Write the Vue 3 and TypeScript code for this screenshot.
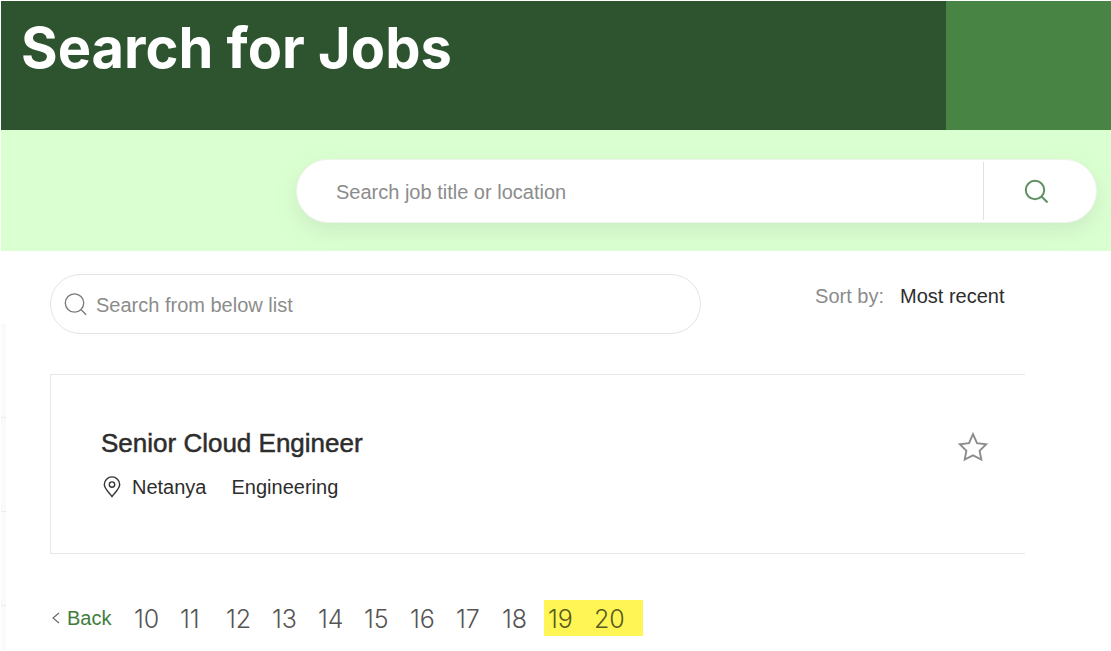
<script setup lang="ts">
import { ref } from 'vue'

interface Job {
  title: string
  city: string
  team: string
}

const query = ref('')
const filter = ref('')
const sort = ref('recent')
const saved = ref(false)
const job: Job = { title: 'Senior Cloud Engineer', city: 'Netanya', team: 'Engineering' }
const pages: number[] = [10, 11, 12, 13, 14, 15, 16, 17, 18]
const marked: number[] = [19, 20]
</script>

<template>
  <div class="page">
    <header class="hero">
      <h1>Search for Jobs</h1>
      <div class="hero-block"></div>
    </header>

    <section class="band">
      <form class="pill" role="search" @submit.prevent>
        <input v-model="query" type="text" aria-label="Search job title or location" placeholder="Search job title or location" />
        <button type="submit" aria-label="Search">
          <svg width="24" height="24" viewBox="0 0 24 24" fill="none" stroke="#5f9060" stroke-width="2">
            <circle cx="11" cy="11" r="9.2" />
            <path d="M17.500 17.500l6 6" />
          </svg>
        </button>
      </form>
    </section>

    <div class="body">
      <aside class="rail"><i></i><i></i><i></i><i></i></aside>
      <main>
        <div class="tools">
          <label class="filter">
            <svg width="24" height="24" viewBox="0 0 24 24" fill="none" stroke="#777" stroke-width="1.3">
              <circle cx="10.5" cy="11" r="9.2" />
              <path d="M17.2 17.700l5 5" />
            </svg>
            <input v-model="filter" type="text" aria-label="Search from below list" placeholder="Search from below list" />
          </label>
          <div class="sort">
            <label for="sort">Sort by:</label>
            <select id="sort" v-model="sort">
              <option value="recent">Most recent</option>
            </select>
          </div>
        </div>

        <article class="card">
          <div>
            <h2>{{ job.title }}</h2>
            <p class="meta">
              <svg width="18" height="22" viewBox="0 0 18 22" fill="none" stroke="#333" stroke-width="1.4">
                <path d="M9 20.5C6 16.5 1.3 12.700 1.300 8.600a7.700 7.700 0 0 1 15.400 0c0 4.100-4.700 7.900-7.700 11.900z" />
                <circle cx="9" cy="8.600" r="2.700" />
              </svg>
              <span class="city">{{ job.city }}</span>
              <span>{{ job.team }}</span>
            </p>
          </div>
          <button class="star" type="button" aria-label="Save job" :aria-pressed="saved" @click="saved = !saved">
            <svg width="30" height="30" viewBox="0 0 30 30" fill="none" stroke="#8c8c8c" stroke-width="1.900">
              <path d="M15 2.200L19 11.200L28.200 12.200L21.600 18.700L23.300 27.500L15 23.400L6.700 27.500L8.400 18.700L1.800 12.200L11 11.200Z" />
            </svg>
          </button>
        </article>

        <nav class="pager" aria-label="Pages">
          <a class="back" href="#back">
            <svg width="8" height="12" viewBox="0 0 8 12" fill="none" stroke="#666" stroke-width="1.100">
              <path d="M7 1L1 6l6 5" />
            </svg>
            Back
          </a>
          <a v-for="n in pages" :key="n" class="num" :href="'#page-' + n">{{ n }}</a>
          <span class="marked">
            <a v-for="n in marked" :key="n" class="num" :href="'#page-' + n">{{ n }}</a>
          </span>
        </nav>
      </main>
    </div>
  </div>
</template>

<style>
body {
  margin: 0;
  background: #fff;
}
</style>

<style scoped>
* {
  box-sizing: border-box;
}
.page {
  padding: 1px 0 0 1px;
  font-family: "Liberation Sans", Arial, sans-serif;
  font-size: 20px;
  color: #2d2d2d;
}
input,
select,
button {
  font: inherit;
  border: 0;
  padding: 0;
  margin: 0;
  background: none;
  outline: 0;
}
input::placeholder {
  color: #8c8c8c;
  opacity: 1;
}
svg {
  display: block;
  flex: none;
}
a {
  text-decoration: none;
}
.hero {
  display: flex;
  justify-content: space-between;
  height: 129px;
  background: #2d542e;
}
h1 {
  margin: 0;
  padding: 12px 0 0 20px;
  font-family: Inter, "Liberation Sans", sans-serif;
  font-weight: 700;
  font-size: 56px;
  line-height: 70px;
  color: #fff;
}
.hero-block {
  width: 165px;
  background: #488544;
}
.band {
  padding: 29px 14px 28px 295px;
  background: #daffd0;
}
.pill {
  display: flex;
  align-items: center;
  height: 64px;
  border: 1px solid #eef5ec;
  border-radius: 32px;
  background: #fff;
  box-shadow: 0 8px 20px rgba(180, 200, 175, 0.35);
}
.pill input {
  flex: 1;
  min-width: 0;
  height: 60px;
  padding: 2px 0 0 39px;
}
.pill button {
  display: flex;
  align-items: center;
  width: 113px;
  height: 58px;
  padding-left: 40px;
  border-left: 1px solid #e2e2e2;
}
.body {
  display: flex;
}
.rail {
  width: 5px;
  margin-top: 73px;
  background: #fafafa;
}
.rail i {
  display: block;
  height: 94px;
  border-bottom: 1px solid #ededed;
}
.rail i:last-child {
  height: 44px;
  border: 0;
}
main {
  flex: 1;
  min-width: 0;
  padding: 23px 86px 0 44px;
}
.tools {
  display: flex;
  justify-content: space-between;
  padding-right: 20px;
}
.filter {
  display: flex;
  align-items: center;
  gap: 8px;
  flex: 0 1 651px;
  height: 60px;
  padding: 0 13px;
  border: 1px solid #e4e4e4;
  border-radius: 30px;
}
.filter input {
  flex: 1;
  min-width: 0;
  padding-top: 2px;
}
.sort {
  display: flex;
  align-items: center;
  gap: 16px;
  height: 44px;
  color: #8c8c8c;
}
.sort select {
  appearance: none;
  color: #2d2d2d;
}
.card {
  display: flex;
  justify-content: space-between;
  margin-top: 40px;
  padding: 53px 37px 52px 50px;
  border: 1px solid #e6e6e6;
  border-right: 0;
}
h2 {
  margin: 0;
  font-weight: 400;
  font-size: 26px;
  line-height: 30px;
  -webkit-text-stroke: 0.5px #2d2d2d;
}
.meta {
  display: flex;
  align-items: center;
  margin: 15px 0 0;
  padding-left: 2px;
  line-height: 28px;
}
.city {
  margin: 0 25px 0 11px;
}
.star {
  height: 30px;
  margin-top: 4px;
  cursor: pointer;
}
.pager {
  display: flex;
  align-items: center;
  margin-top: 46px;
  height: 36px;
}
.back {
  display: flex;
  align-items: center;
  gap: 7px;
  width: 80px;
  padding-left: 2px;
  color: #3f7d3c;
}
.num {
  width: 46px;
  padding: 2px 0 0 4px;
  font-family: Inter, "Liberation Sans", sans-serif;
  font-weight: 300;
  font-size: 25px;
  line-height: 34px;
  color: #555;
}
.marked {
  display: flex;
  padding-right: 7px;
  background: #fff655;
}
.marked .num {
  color: #5a5a20;
}
</style>
